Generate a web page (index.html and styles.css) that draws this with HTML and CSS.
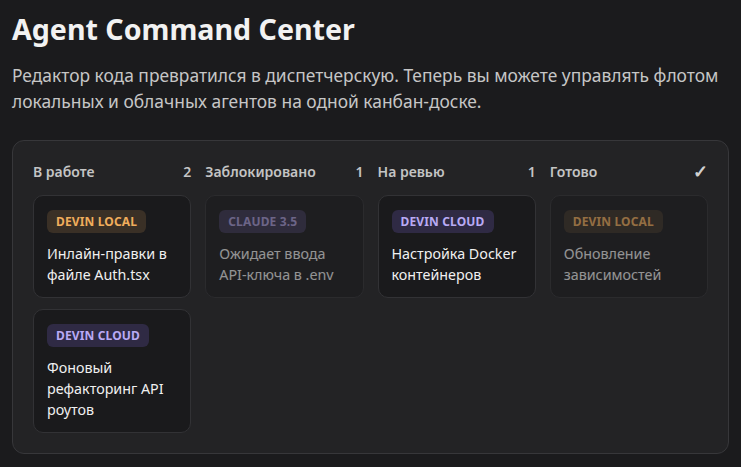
FILE: index.html
```html
<!DOCTYPE html>
<html lang="ru">
<head>
<meta charset="utf-8">
<title>Agent Command Center</title>
<link rel="stylesheet" href="styles.css">
</head>
<body>
<main class="page">
  <h1 class="title">Agent Command Center</h1>
  <p class="lead">Редактор кода превратился в диспетчерскую. Теперь вы можете управлять флотом локальных и облачных агентов на одной канбан-доске.</p>
  <section class="board">
    <div class="column">
      <div class="col-head"><span>В работе</span><span class="count">2</span></div>
      <div class="card">
        <span class="badge local">DEVIN LOCAL</span>
        <p class="task">Инлайн-правки в файле Auth.tsx</p>
      </div>
      <div class="card">
        <span class="badge cloud">DEVIN CLOUD</span>
        <p class="task">Фоновый рефакторинг API роутов</p>
      </div>
    </div>
    <div class="column">
      <div class="col-head"><span>Заблокировано</span><span class="count">1</span></div>
      <div class="card muted">
        <span class="badge claude">CLAUDE 3.5</span>
        <p class="task">Ожидает ввода API-ключа в .env</p>
      </div>
    </div>
    <div class="column">
      <div class="col-head"><span>На ревью</span><span class="count">1</span></div>
      <div class="card">
        <span class="badge cloud">DEVIN CLOUD</span>
        <p class="task">Настройка Docker контейнеров</p>
      </div>
    </div>
    <div class="column">
      <div class="col-head"><span>Готово</span><span class="count check">✓</span></div>
      <div class="card muted">
        <span class="badge local">DEVIN LOCAL</span>
        <p class="task">Обновление зависимостей</p>
      </div>
    </div>
  </section>
</main>
</body>
</html>
```

FILE: styles.css
```css
* { box-sizing: border-box; }
html, body { margin: 0; padding: 0; }
body {
  background: #1b1b1d;
  color: #e8e8e8;
  font-family: "Noto Sans", "Open Sans", sans-serif;
}
.page {
  padding: 10px 12px 14px 12px;
}
.title {
  margin: 0;
  font-size: 28.6px;
  line-height: 38px;
  font-weight: 700;
  color: #f2f2f2;
}
.lead {
  margin: 14px 0 0 0;
  font-size: 17.4px;
  line-height: 26px;
  color: #c6c6c6;
  max-width: 716px;
}
.board {
  margin-top: 26px;
  background: #232325;
  border: 1px solid #37373a;
  border-radius: 12px;
  padding: 20px;
  display: grid;
  grid-template-columns: repeat(4, 1fr);
  gap: 14px;
  align-items: start;
}
.column {
  display: flex;
  flex-direction: column;
  gap: 11px;
}
.col-head {
  display: flex;
  justify-content: space-between;
  align-items: center;
  font-size: 14px;
  font-weight: 600;
  color: #c4c4c4;
  height: 20px;
  margin-bottom: 3px;
}
.count { font-weight: 600; }
.check { font-size: 18px; font-weight: 700; color: #d0d0d0; }
.card {
  background: #1a1a1c;
  border: 1px solid #323235;
  border-radius: 10px;
  padding: 13px 13px 12px 13px;
}
.card.muted { opacity: 0.55; }
.badge {
  display: inline-block;
  font-size: 12px;
  line-height: 23px;
  height: 23px;
  padding: 0 9px;
  border-radius: 6px;
  font-weight: 700;
  letter-spacing: 0.15px;
}
.badge.local { background: #3a3026; color: #f0ad5c; }
.badge.cloud { background: #2f2a44; color: #b9aaf5; }
.badge.claude { background: #3a3450; color: #a89bd8; }
.task {
  margin: 10px 0 0 0;
  font-size: 14.3px;
  line-height: 21px;
  color: #f0f0f0;
}
```
